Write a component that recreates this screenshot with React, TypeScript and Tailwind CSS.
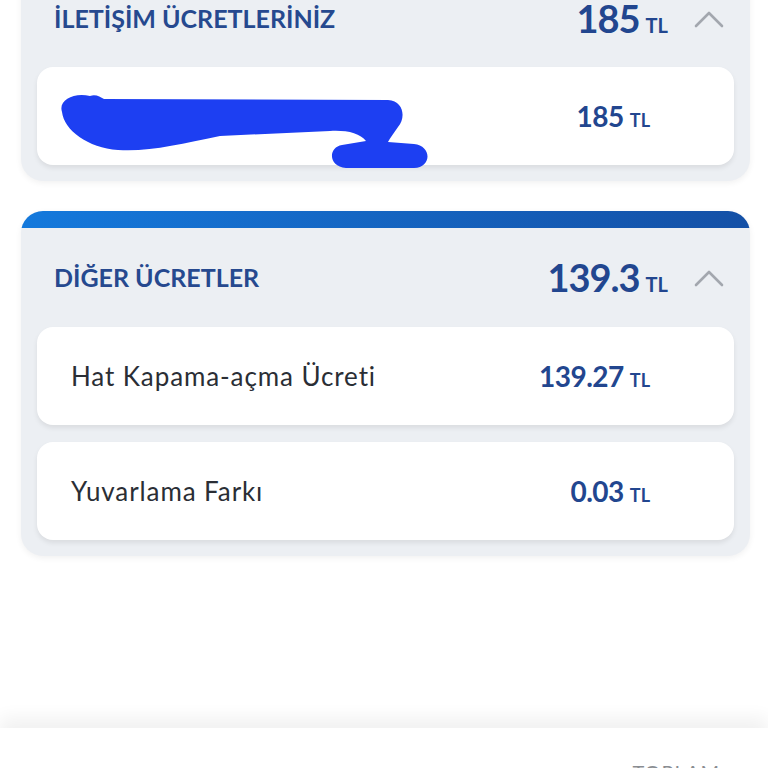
import { ReactNode } from "react";

function Chevron() {
  return (
    <svg width="30" height="20" viewBox="0 0 30 20" fill="none" className="ml-[26px]">
      <path d="M2 17 L15 4 L28 17" stroke="#a3a7ae" strokeWidth="2.6" strokeLinecap="round" strokeLinejoin="round" />
    </svg>
  );
}

function Amount({ value, big }: { value: string; big?: boolean }) {
  return (
    <div className="flex items-baseline text-[#22468f]">
      <span className={big ? "text-[38px] font-bold tracking-[-1px]" : "text-[28px] font-bold tracking-[-0.5px]"}>{value}</span>
      <span className={big ? "ml-[6px] text-[20px] font-bold" : "ml-[6px] text-[18px] font-bold"}>TL</span>
    </div>
  );
}

function Row({ label, value }: { label?: string; value: string }) {
  return (
    <div className="relative flex h-[98px] items-center rounded-[16px] bg-white pl-[34px] pr-[84px] shadow-[0_3px_5px_rgba(0,0,0,0.08)]">
      <div className="flex-1 text-[26px] tracking-[0.9px] text-[#2a2e35]">{label}</div>
      <Amount value={value} />
    </div>
  );
}

function Section({ title, total, top, children }: { title: string; total: string; top?: boolean; children: ReactNode }) {
  return (
    <div className="ml-[21px] mr-[18px] overflow-hidden rounded-[22px] bg-[#eceff3] shadow-[0_2px_6px_rgba(0,0,0,0.06)]">
      {top && <div className="h-[17px] bg-gradient-to-r from-[#1479dc] to-[#1450a6]" />}
      <div className="px-[16px] pb-[16px]">
        <div className={top ? "flex h-[99px] items-center pl-[17px] pr-[10px]" : "flex h-[97px] items-center pl-[17px] pr-[10px]"}>
          <div className="flex-1 text-[25px] font-bold text-[#26498f]">{title}</div>
          <Amount value={total} big />
          <Chevron />
        </div>
        <div className="flex flex-col gap-[17px]">{children}</div>
      </div>
    </div>
  );
}

export default function App() {
  return (
    <div className="relative h-[768px] w-[768px] overflow-hidden bg-white font-['Lato',sans-serif]">
      <div className="-mt-[30px] flex flex-col gap-[30px]">
        <Section title="İLETİŞİM ÜCRETLERİNİZ" total="185">
          <div className="relative">
            <Row value="185" />
            <svg className="absolute left-0 top-0" width="460" height="110" viewBox="37 67 460 110">
              <path
                d="M62 112 C58 100 74 92 90 96 C96 94 100 97 104 99 L388 100 C404 101 406 118 398 127 C394 133 390 138 388 142 L414 144 C432 146 432 167 414 168 L346 168 C328 167 328 147 342 145 L366 141 C360 133 346 130 330 131 L220 136 C180 144 150 152 118 150 C88 148 64 130 62 112 Z"
                fill="#1d3ff2"
              />
            </svg>
          </div>
        </Section>
        <Section title="DİĞER ÜCRETLER" total="139.3" top>
          <Row label="Hat Kapama-açma Ücreti" value="139.27" />
          <Row label="Yuvarlama Farkı" value="0.03" />
        </Section>
      </div>
      <div className="absolute bottom-0 left-0 right-0 h-[40px] bg-white shadow-[0_-10px_18px_rgba(0,0,0,0.06)]">
        <div className="absolute right-[48px] top-[29px] text-[20px] tracking-[1px] text-[#8a8d92]">TOPLAM</div>
      </div>
    </div>
  );
}
